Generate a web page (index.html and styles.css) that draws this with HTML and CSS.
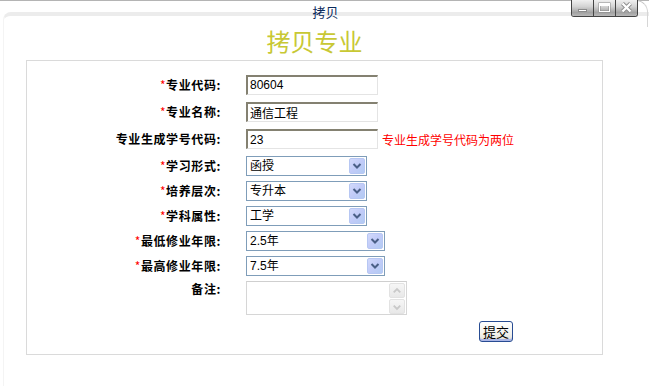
FILE: index.html
```html
<!DOCTYPE html>
<html lang="zh-CN">
<head>
    <meta charset="UTF-8">
    <title>拷贝专业</title>
    <link rel="stylesheet" href="styles.css">
</head>
<body>
    <div class="window">
        <!-- barra de título -->
        <div class="titlebar">
            <span class="title">拷贝</span>
            <div class="controls">
                <span class="ctl">
                    <svg width="21" height="16" viewBox="0 0 21 16"><rect x="6.5" y="9.5" width="8" height="2" fill="#fff" stroke="#8a8a8a" stroke-width="1"/></svg>
                </span>
                <span class="ctl">
                    <svg width="21" height="16" viewBox="0 0 21 16"><rect x="5.5" y="3.5" width="10" height="8" fill="none" stroke="#8a8a8a" stroke-width="2"/><rect x="5.5" y="3.5" width="10" height="8" fill="none" stroke="#fff" stroke-width="1"/><rect x="6" y="4" width="9" height="2" fill="#fff"/></svg>
                </span>
                <span class="ctl">
                    <svg width="21" height="16" viewBox="0 0 21 16"><path d="M6.5 3.5 L14.5 11.5 M14.5 3.5 L6.5 11.5" stroke="#8a8a8a" stroke-width="4"/><path d="M6.5 3.5 L14.5 11.5 M14.5 3.5 L6.5 11.5" stroke="#fff" stroke-width="2.4"/></svg>
                </span>
            </div>
        </div>

        <div class="frame">
            <h1 class="heading">拷贝专业</h1>
            <div class="panel">
                <form class="form" onsubmit="return false;">
                    <label class="label"><span class="req">*</span>专业代码:</label>
                    <div class="field"><input class="text" type="text" value="80604"></div>

                    <label class="label"><span class="req">*</span>专业名称:</label>
                    <div class="field"><input class="text" type="text" value="通信工程"></div>

                    <label class="label">专业生成学号代码:</label>
                    <div class="field"><input class="text" type="text" value="23"><span class="hint">专业生成学号代码为两位</span></div>

                    <label class="label"><span class="req">*</span>学习形式:</label>
                    <div class="field">
                        <div class="select">
                            <select><option>函授</option></select>
                            <span class="drop"><svg width="14" height="16" viewBox="0 0 14 16"><path d="M3.5 6 L7 9.5 L10.5 6" stroke="#4a5f86" stroke-width="2" fill="none"/></svg></span>
                        </div>
                    </div>

                    <label class="label"><span class="req">*</span>培养层次:</label>
                    <div class="field">
                        <div class="select">
                            <select><option>专升本</option></select>
                            <span class="drop"><svg width="14" height="16" viewBox="0 0 14 16"><path d="M3.5 6 L7 9.5 L10.5 6" stroke="#4a5f86" stroke-width="2" fill="none"/></svg></span>
                        </div>
                    </div>

                    <label class="label"><span class="req">*</span>学科属性:</label>
                    <div class="field">
                        <div class="select">
                            <select><option>工学</option></select>
                            <span class="drop"><svg width="14" height="16" viewBox="0 0 14 16"><path d="M3.5 6 L7 9.5 L10.5 6" stroke="#4a5f86" stroke-width="2" fill="none"/></svg></span>
                        </div>
                    </div>

                    <label class="label"><span class="req">*</span>最低修业年限:</label>
                    <div class="field">
                        <div class="select wide">
                            <select><option>2.5年</option></select>
                            <span class="drop"><svg width="14" height="16" viewBox="0 0 14 16"><path d="M3.5 6 L7 9.5 L10.5 6" stroke="#4a5f86" stroke-width="2" fill="none"/></svg></span>
                        </div>
                    </div>

                    <label class="label"><span class="req">*</span>最高修业年限:</label>
                    <div class="field">
                        <div class="select wide">
                            <select><option>7.5年</option></select>
                            <span class="drop"><svg width="14" height="16" viewBox="0 0 14 16"><path d="M3.5 6 L7 9.5 L10.5 6" stroke="#4a5f86" stroke-width="2" fill="none"/></svg></span>
                        </div>
                    </div>

                    <label class="label label-top">备注:</label>
                    <div class="field field-top">
                        <div class="memo">
                            <textarea></textarea>
                            <div class="scroll">
                                <span class="sbtn"><svg width="15" height="14" viewBox="0 0 15 14"><path d="M4 8.5 L7.5 5 L11 8.5" stroke="#c9c9c9" stroke-width="2" fill="none"/></svg></span>
                                <span class="sbtn"><svg width="15" height="14" viewBox="0 0 15 14"><path d="M4 5.5 L7.5 9 L11 5.5" stroke="#c9c9c9" stroke-width="2" fill="none"/></svg></span>
                            </div>
                        </div>
                    </div>

                    <div class="actions">
                        <button class="submit" type="submit">提交</button>
                    </div>
                </form>
            </div>
        </div>
    </div>
</body>
</html>
```

FILE: styles.css
```css
/* general */
body {
    margin: 0;
    background: #ffffff;
    font-family: "Noto Sans CJK SC", sans-serif;
    font-size: 12px;
    color: #000000;
}
.window {
    position: relative;
    height: 390px;
}
.titlebar {
    height: 11px;
    border-top: 1px solid #b4b4b4;
    text-align: center;
}
.titlebar::after {
    content: "";
    position: absolute;
    top: 0;
    right: 1px;
    width: 12px;
    height: 26px;
    border-top: 1px solid #c4c4c4;
    border-right: 1px solid #d6d6d6;
    border-top-right-radius: 12px;
}
.title {
    display: inline-block;
    padding-top: 3px;
    padding-left: 2px;
    line-height: 15px;
    font-size: 13px;
    color: #0a2a5c;
    position: relative;
    z-index: 1;
}
.controls {
    position: absolute;
    top: 0;
    right: 11px;
    display: flex;
    border: 1px solid #444444;
    border-top: none;
    border-radius: 0 0 3px 3px;
    overflow: hidden;
    z-index: 2;
}
.ctl {
    display: block;
    width: 21px;
    height: 16px;
    background: linear-gradient(#f0f0f0 0%, #d4d4d4 40%, #a2a2a2 78%, #b8b8b8 100%);
    border-right: 1px solid #444444;
}
.ctl:last-child {
    border-right: none;
}
.ctl svg {
    display: block;
}
.frame {
    margin-left: 3px;
    border-top: 4px solid #ececec;
    border-left: 1px solid #f4f4f4;
    border-top-left-radius: 8px;
    height: 370px;
}
.heading {
    margin: 10px 0 5px 22px;
    width: 577px;
    text-align: center;
    font-size: 24px;
    line-height: 29px;
    font-weight: normal;
    color: #c8c834;
}
.panel {
    margin-left: 22px;
    width: 575px;
    border: 1px solid #dadada;
    padding: 10px 0 12px 0;
}
.form {
    display: grid;
    grid-template-columns: 194px 1fr;
    grid-template-rows: 27px 27px 28px repeat(5, 25px) auto auto;
    column-gap: 25px;
    align-items: center;
    margin: 0;
}
.label {
    text-align: right;
    font-weight: bold;
    line-height: 16px;
    letter-spacing: 0.6px;
    white-space: nowrap;
}
.req {
    color: #ff0000;
    font-weight: normal;
}
.field {
    display: flex;
    align-items: center;
    gap: 4px;
}
.text {
    box-sizing: border-box;
    width: 132px;
    height: 20px;
    margin: 0;
    padding: 0 0 0 2px;
    border-top: 2px solid #848171;
    border-left: 2px solid #848171;
    border-right: 1px solid #e4e4e4;
    border-bottom: 1px solid #e4e4e4;
    font-family: "Liberation Sans", "Noto Sans CJK SC", sans-serif;
    font-size: 12px;
    color: #000000;
    outline: none;
}
.hint {
    color: #ff0000;
    white-space: nowrap;
}
.select {
    box-sizing: border-box;
    display: flex;
    width: 121px;
    height: 20px;
    padding: 1px;
    border: 1px solid #7f9db9;
    background: #ffffff;
}
.select.wide {
    width: 139px;
}
.select select {
    flex: 1;
    min-width: 0;
    appearance: none;
    -webkit-appearance: none;
    border: none;
    background: transparent;
    padding: 0 0 0 2px;
    margin: 0;
    font-family: "Liberation Sans", "Noto Sans CJK SC", sans-serif;
    font-size: 12px;
    color: #000000;
    outline: none;
}
.drop {
    box-sizing: border-box;
    width: 16px;
    height: 16px;
    border: 1px solid #b7c7f3;
    border-radius: 2px;
    background: linear-gradient(135deg, #d2d9fb 0%, #c1cbf8 50%, #b2cbf3 100%);
    display: flex;
    align-items: center;
    justify-content: center;
}
.drop svg {
    display: block;
}
.label-top {
    align-self: start;
    margin-top: 3px;
}
.field-top {
    align-self: start;
    margin-top: 3px;
}
.memo {
    box-sizing: border-box;
    display: flex;
    width: 161px;
    height: 34px;
    border: 1px solid #d6d6d6;
    border-top-color: #cfcfcf;
}
.memo textarea {
    flex: 1;
    border: none;
    resize: none;
    overflow: hidden;
    padding: 0;
    margin: 0;
    outline: none;
}
.scroll {
    display: flex;
    flex-direction: column;
    gap: 1px;
    width: 17px;
    padding-top: 1px;
}
.sbtn {
    box-sizing: border-box;
    width: 16px;
    height: 15px;
    border: 1px solid #e2e2e2;
    border-radius: 2px;
    background: linear-gradient(#f6f6f6, #e8e8e8);
    display: flex;
    align-items: center;
    justify-content: center;
}
.actions {
    grid-column: 2;
    margin-top: 6px;
    padding-left: 233px;
}
.submit {
    box-sizing: border-box;
    display: block;
    width: 34px;
    height: 21px;
    padding: 0;
    border: 1px solid #284c93;
    border-radius: 3px;
    background: linear-gradient(#ffffff 0%, #f4f3ee 60%, #e2ded4 100%);
    box-shadow: inset 0 -2px 0 #aab6e6;
    font-family: "Noto Sans CJK SC", sans-serif;
    font-size: 13px;
    line-height: 17px;
    color: #000000;
    cursor: pointer;
}
```
